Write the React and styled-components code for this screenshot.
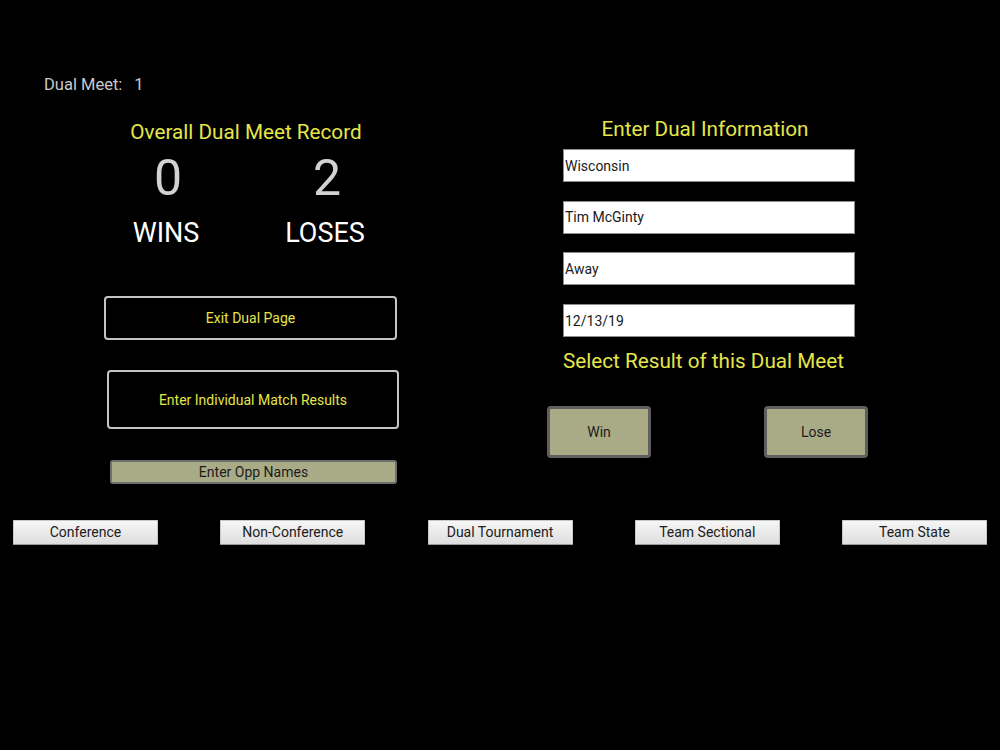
import styled, { createGlobalStyle } from "styled-components";

const GlobalStyle = createGlobalStyle`
	body {
		margin: 0;
		background: #000;
		font-family: Roboto, "Liberation Sans", sans-serif;
	}
`;

const YELLOW = "#e4e64a";
const OLIVE = "#a9ab86";

function App() {
	return (
		<>
			<GlobalStyle />
			<Page>
				<Columns>
					<LeftColumn>
						<MeetLabel>
							Dual Meet:<MeetNumber>1</MeetNumber>
						</MeetLabel>
						<RecordTitle>Overall Dual Meet Record</RecordTitle>
						<StatsRow>
							<Stat>
								<StatNumber>0</StatNumber>
								<StatLabel>WINS</StatLabel>
							</Stat>
							<Stat>
								<StatNumber>2</StatNumber>
								<StatLabel>LOSES</StatLabel>
							</Stat>
						</StatsRow>
						<OutlineButton $left={104} $width={293} $height={44} $top={47}>
							Exit Dual Page
						</OutlineButton>
						<OutlineButton $left={107} $width={292} $height={59} $top={30}>
							Enter Individual Match Results
						</OutlineButton>
						<OppButton>Enter Opp Names</OppButton>
					</LeftColumn>

					<RightColumn>
						<SectionTitle>Enter Dual Information</SectionTitle>
						<Fields>
							<Field defaultValue="Wisconsin" />
							<Field defaultValue="Tim McGinty" />
							<Field defaultValue="Away" />
							<Field defaultValue="12/13/19" />
						</Fields>
						<ResultTitle>Select Result of this Dual Meet</ResultTitle>
						<ResultRow>
							<ResultButton>Win</ResultButton>
							<ResultButton>Lose</ResultButton>
						</ResultRow>
					</RightColumn>
				</Columns>

				<TypeRow>
					<TypeButton>Conference</TypeButton>
					<TypeButton>Non-Conference</TypeButton>
					<TypeButton>Dual Tournament</TypeButton>
					<TypeButton>Team Sectional</TypeButton>
					<TypeButton>Team State</TypeButton>
				</TypeRow>
			</Page>
		</>
	);
}

const Page = styled.div`
	width: 1000px;
	height: 750px;
	background: #000;
	overflow: hidden;
`;

const Columns = styled.div`
	display: flex;
	align-items: flex-start;
`;

const LeftColumn = styled.div`
	width: 500px;
	padding-top: 75px;
	display: flex;
	flex-direction: column;
`;

const MeetLabel = styled.div`
	padding-left: 44px;
	font-size: 16.5px;
	line-height: 20px;
	color: #c9c9c9;
`;

const MeetNumber = styled.span`
	margin-left: 12px;
`;

const RecordTitle = styled.div`
	width: 492px;
	margin-top: 25px;
	text-align: center;
	font-size: 20.7px;
	line-height: 24px;
	color: ${YELLOW};
`;

const StatsRow = styled.div`
	display: grid;
	grid-template-columns: 120px 120px;
	column-gap: 39px;
	margin-top: 6px;
	padding-left: 106px;
`;

const Stat = styled.div`
	display: flex;
	flex-direction: column;
	align-items: center;
`;

const StatNumber = styled.div`
	font-size: 50px;
	line-height: 56px;
	color: #d2d2d2;
	padding-left: 4px;
`;

const StatLabel = styled.div`
	margin-top: 11px;
	font-size: 27px;
	line-height: 32px;
	color: #fff;
`;

const OutlineButton = styled.button`
	box-sizing: border-box;
	margin: ${(p) => p.$top}px 0 0 ${(p) => p.$left}px;
	width: ${(p) => p.$width}px;
	height: ${(p) => p.$height}px;
	background: #000;
	border: 2px solid #c4c4c4;
	border-radius: 4px;
	color: ${YELLOW};
	font-family: inherit;
	font-size: 14px;
`;

const OppButton = styled.button`
	box-sizing: border-box;
	margin: 31px 0 0 110px;
	width: 287px;
	height: 24px;
	padding: 0;
	background: ${OLIVE};
	border: 2px solid #6f6f6f;
	border-radius: 3px;
	color: #1c1c1c;
	font-family: inherit;
	font-size: 14px;
`;

const RightColumn = styled.div`
	width: 500px;
	padding-top: 117px;
	display: flex;
	flex-direction: column;
`;

const SectionTitle = styled.div`
	width: 410px;
	text-align: center;
	font-size: 20.7px;
	line-height: 24px;
	color: ${YELLOW};
`;

const Fields = styled.div`
	display: flex;
	flex-direction: column;
	gap: 18.7px;
	margin: 8px 0 0 63px;
`;

const Field = styled.input`
	box-sizing: border-box;
	width: 292px;
	height: 33px;
	padding: 0 0 0 1px;
	background: #fff;
	border: 1px solid #8c8c8c;
	border-radius: 0;
	outline: none;
	color: #1a1a1a;
	font-family: inherit;
	font-size: 14px;
`;

const ResultTitle = styled.div`
	margin: 12px 0 0 63px;
	font-size: 20.7px;
	line-height: 24px;
	color: ${YELLOW};
`;

const ResultRow = styled.div`
	display: flex;
	gap: 113px;
	margin: 33px 0 0 47px;
`;

const ResultButton = styled.button`
	box-sizing: border-box;
	width: 104px;
	height: 52px;
	background: ${OLIVE};
	border: 3px solid #5f5f5f;
	border-radius: 4px;
	color: #1c1c1c;
	font-family: inherit;
	font-size: 14px;
`;

const TypeRow = styled.div`
	display: flex;
	justify-content: space-between;
	margin-top: 36px;
	padding: 0 13px;
`;

const TypeButton = styled.button`
	box-sizing: border-box;
	width: 145px;
	height: 25px;
	padding: 0 0 2px;
	background: linear-gradient(#f6f6f6, #dedede);
	border: 1px solid #c8c8c8;
	border-bottom-color: #9a9a9a;
	border-radius: 1px;
	color: #202020;
	font-family: inherit;
	font-size: 14px;
`;

export default App;
